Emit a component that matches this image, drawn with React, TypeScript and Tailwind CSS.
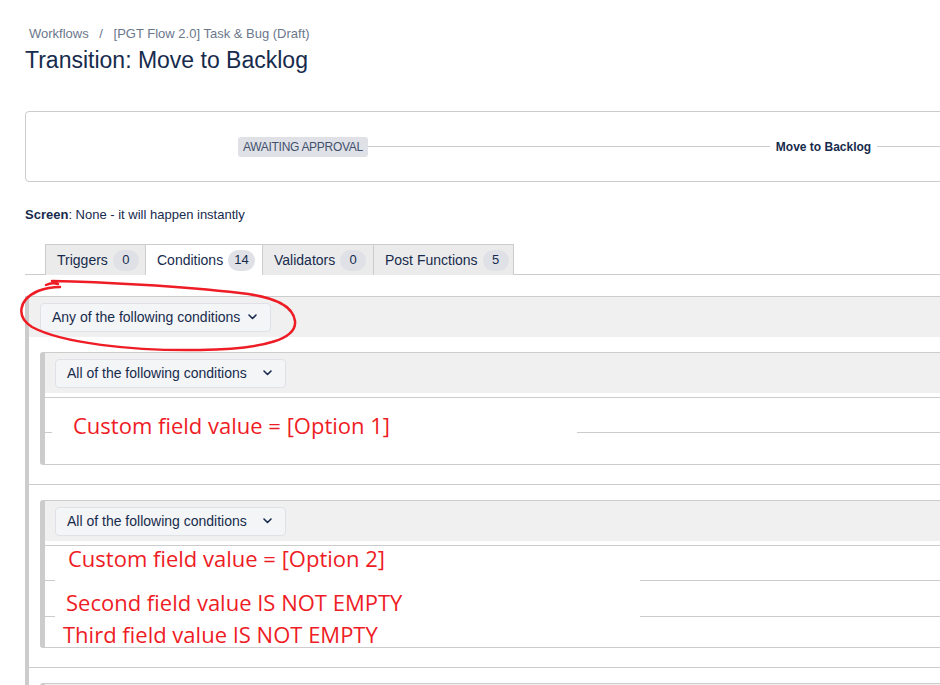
import React from "react";

const tabs = [
  { name: "Triggers", count: 0, width: "w-[100px]", active: false },
  { name: "Conditions", count: 14, width: "w-[117px]", active: true },
  { name: "Validators", count: 0, width: "w-[111px]", active: false },
  { name: "Post Functions", count: 5, width: "w-[141px]", active: false },
];

function Chevron() {
  return (
    <svg width="9" height="6" viewBox="0 0 9 6" className="shrink-0">
      <path d="M1 1 L4.5 4.5 L8 1" fill="none" stroke="#172b4d" strokeWidth="1.6" strokeLinecap="round" strokeLinejoin="round" />
    </svg>
  );
}

function Select({ label }: { label: string }) {
  return (
    <div className="w-[231px] h-[29px] flex items-center justify-between pl-[11px] pr-[13px] bg-[#f4f5f7] border border-[#dfe1e6] rounded-[4px] text-[14px] text-[#172b4d]">
      <span>{label}</span>
      <Chevron />
    </div>
  );
}

// rows are border-box, so the height includes the divider line
function Block({ heights }: { heights: string[] }) {
  return (
    <div className="border border-[#ccc] border-l-[5px] rounded-l-[3px] bg-white">
      <div className="h-[40px] bg-[#f0f0f0] flex items-center pl-[10px]">
        <Select label="All of the following conditions" />
      </div>
      <div className="h-[4px]" />
      <div className="border-t border-[#ccc]">
        {heights.map((h, i) => (
          <div key={i} className={`${h} ${i < heights.length - 1 ? "border-b border-[#ccc]" : ""}`} />
        ))}
      </div>
    </div>
  );
}

export default function App() {
  return (
    <div className="w-[940px] h-[685px] overflow-hidden bg-white relative font-['Segoe_UI','Liberation_Sans',Arial,sans-serif] text-[#172b4d]">
      <div className="w-[1100px] pl-[25px]">
        {/* Breadcrumb */}
        <div className="pt-[25px] pl-[4px] text-[13px] leading-[18px] text-[#6b778c]">
          Workflows <span className="mx-[7px]">/</span> [PGT Flow 2.0] Task &amp; Bug (Draft)
        </div>
        <h1 className="mt-[2px] text-[23px] leading-[30px] font-normal">Transition: Move to Backlog</h1>

        {/* Transition diagram */}
        <div className="mt-[36px] h-[71px] border border-[#ccc] rounded-l-[4px] flex items-center pl-[212px]">
          <span className="h-[20px] px-[5px] flex items-center bg-[#dfe1e6] rounded-[3px] text-[12px] text-[#42526e] tracking-tight">
            AWAITING APPROVAL
          </span>
          <div className="w-[402px] h-px bg-[#ccc]" />
          <span className="px-[6px] text-[12px] font-bold text-[#172b4d]">Move to Backlog</span>
          <div className="flex-1 h-px bg-[#ccc]" />
        </div>

        {/* Screen */}
        <div className="mt-[24px] text-[13px] leading-[18px]">
          <span className="font-bold">Screen</span>: None - it will happen instantly
        </div>

        {/* Tabs */}
        <div className="mt-[20px] pl-[20px] flex border-b border-[#ccc]">
          {tabs.map((t, i) => (
            <div
              key={t.name}
              className={`${t.width} h-[31px] -mb-px flex items-center gap-[5px] pl-[11px] border-t border-l border-[#ccc] ${
                i === tabs.length - 1 ? "border-r" : ""
              } ${t.active ? "bg-white" : "bg-[#ebebeb]"} text-[14px] text-[#172b4d]`}
            >
              <span>{t.name}</span>
              <span className="min-w-[26px] h-[21px] px-[6px] flex items-center justify-center rounded-full bg-[#dfe1e6] text-[13px]">
                {t.count}
              </span>
            </div>
          ))}
        </div>

        {/* Conditions */}
        <div className="mt-[21px] border-l-4 border-[#ccc]">
          <div className="h-[41px] bg-[#f0f0f0] border-t border-[#ccc] flex items-center pl-[11px]">
            <Select label="Any of the following conditions" />
          </div>
          <div className="pl-[11px] pt-[15px] pb-[19px] border-b border-[#ccc]">
            <Block heights={["h-[35px]", "h-[31px]"]} />
          </div>
          <div className="pl-[11px] pt-[15px] pb-[19px] border-b border-[#ccc]">
            <Block heights={["h-[35px]", "h-[36px]", "h-[30px]"]} />
          </div>
          <div className="pl-[11px] pt-[15px]">
            <Block heights={["h-[35px]"]} />
          </div>
        </div>
      </div>

      {/* Annotations */}
      <div className="absolute left-[52px] top-[402px] w-[525px] h-[46px] bg-white flex items-center pl-[21px] font-['Open_Sans',sans-serif] text-[22px] text-[#ee1c25]">
        Custom field value = [Option 1]
      </div>
      <div className="absolute left-[55px] top-[548px] w-[585px] h-[98px] bg-white font-['Open_Sans',sans-serif] text-[22px] leading-[26px] text-[#ee1c25]">
        <div className="absolute left-[13px] top-[-3px]">Custom field value = [Option 2]</div>
        <div className="absolute left-[11px] top-[41px]">Second field value IS NOT EMPTY</div>
        <div className="absolute left-[8px] top-[73px]">Third field value IS NOT EMPTY</div>
      </div>
      <svg className="absolute left-0 top-0 pointer-events-none" width="940" height="685">
        <path
          d="M46 285 C50 283 54 283 58 284 M52 281 C100 282 180 286 240 293 C276 297 293 306 295 321 C297 338 268 349 200 350 C130 351 62 343 32 327 C16 317 18 300 38 291 C46 288 53 287 60 287"
          fill="none"
          stroke="#ee1c25"
          strokeWidth="2.5"
          strokeLinecap="round"
        />
      </svg>
    </div>
  );
}
